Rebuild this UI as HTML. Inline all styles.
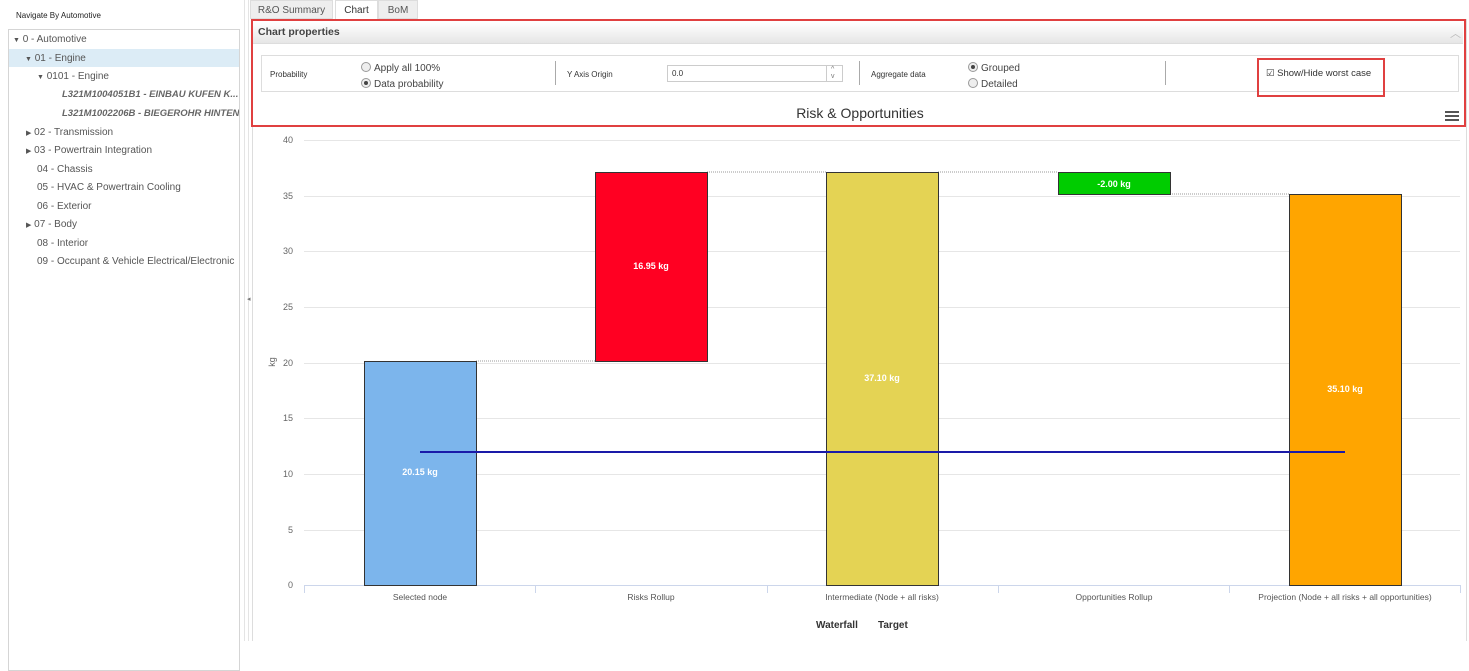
<!DOCTYPE html>
<html><head><meta charset="utf-8"><style>
body{margin:0;width:1469px;height:641px;overflow:hidden;background:#fff;font-family:"Liberation Sans",Arial,sans-serif;position:relative}
.a{position:absolute}
.t{font-size:10px;color:#555;white-space:nowrap}
.tri{font-size:7px;color:#555}
.r{display:inline-block;width:8px;height:8px;border:1px solid #999;border-radius:50%;background:#eee;vertical-align:-1px;margin-right:3px;position:relative}
.r.on:after{content:"";position:absolute;left:2px;top:2px;width:4px;height:4px;border-radius:50%;background:#444}
.lb{font-size:10px;color:#444;white-space:nowrap}
</style></head><body>
<div class="a" style="left:16px;top:11px;font-size:8px;color:#222">Navigate By Automotive</div>
<div class="a" style="left:8px;top:29px;width:230px;height:640px;border:1px solid #d5d5d5;overflow:hidden">
<div class="a" style="left:0;top:19px;width:230px;height:18px;background:#dcecf6"></div>
<div class="a t" style="left:4px;top:4px"><span class="tri">▼</span> 0 - Automotive</div>
<div class="a t" style="left:16px;top:23px"><span class="tri">▼</span> 01 - Engine</div>
<div class="a t" style="left:28px;top:41px"><span class="tri">▼</span> 0101 - Engine</div>
<div class="a t" style="left:53px;top:59px;font-weight:bold;font-style:italic;color:#666;font-size:9.5px">L321M1004051B1 - EINBAU KUFEN K...</div>
<div class="a t" style="left:53px;top:78px;font-weight:bold;font-style:italic;color:#666;font-size:9.5px">L321M1002206B - BIEGEROHR HINTEN</div>
<div class="a t" style="left:17px;top:97px"><span class="tri">▶</span> 02 - Transmission</div>
<div class="a t" style="left:17px;top:115px"><span class="tri">▶</span> 03 - Powertrain Integration</div>
<div class="a t" style="left:28px;top:134px">04 - Chassis</div>
<div class="a t" style="left:28px;top:152px">05 - HVAC &amp; Powertrain Cooling</div>
<div class="a t" style="left:28px;top:171px">06 - Exterior</div>
<div class="a t" style="left:17px;top:189px"><span class="tri">▶</span> 07 - Body</div>
<div class="a t" style="left:28px;top:208px">08 - Interior</div>
<div class="a t" style="left:28px;top:226px">09 - Occupant &amp; Vehicle Electrical/Electronic</div>
</div>
<div class="a" style="left:244px;top:0;width:1px;height:641px;background:#e4e4e4"></div>
<div class="a" style="left:248px;top:0;width:1px;height:641px;background:#e4e4e4"></div>
<div class="a" style="left:247px;top:295px;font-size:7px;color:#777">◂</div>
<div class="a" style="left:250px;top:0;width:83px;height:19px;background:#eee;border:1px solid #ddd;box-sizing:border-box;font-size:10px;color:#555;text-align:center;line-height:19px">R&amp;O Summary</div>
<div class="a" style="left:335px;top:0;width:43px;height:20px;background:#fff;border:1px solid #ddd;border-bottom:none;box-sizing:border-box;font-size:10px;color:#333;text-align:center;line-height:19px">Chart</div>
<div class="a" style="left:378px;top:0;width:40px;height:19px;background:#eee;border:1px solid #ddd;box-sizing:border-box;font-size:10px;color:#555;text-align:center;line-height:19px">BoM</div>
<div class="a" style="left:252px;top:19px;width:1213px;height:622px;border-left:1px solid #ddd;border-right:1px solid #ddd"></div>
<div class="a" style="left:253px;top:22px;width:1210px;height:21px;background:linear-gradient(#fff,#e6e6e6);border-bottom:1px solid #ddd"></div>
<div class="a" style="left:258px;top:26px;font-size:10.5px;font-weight:bold;color:#444">Chart properties</div>
<div class="a" style="left:1450px;top:25px;font-size:11px;color:#bbb">︿</div>
<div class="a" style="left:261px;top:55px;width:1198px;height:37px;border:1px solid #ddd;box-sizing:border-box"></div>
<div class="a" style="left:270px;top:70px;font-size:8px;color:#333">Probability</div>
<div class="a lb" style="left:361px;top:62px"><span class="r"></span>Apply all 100%</div>
<div class="a lb" style="left:361px;top:78px"><span class="r on"></span>Data probability</div>
<div class="a" style="left:555px;top:61px;width:1px;height:24px;background:#aaa"></div>
<div class="a" style="left:567px;top:70px;font-size:8px;color:#333">Y Axis Origin</div>
<div class="a" style="left:667px;top:65px;width:176px;height:17px;border:1px solid #ccc;box-sizing:border-box;font-size:8px;color:#333;padding:3px 4px">0.0</div>
<div class="a" style="left:826px;top:66px;width:1px;height:15px;background:#ccc"></div>
<div class="a" style="left:831px;top:66px;font-size:7px;color:#777;line-height:7px">^<br>v</div>
<div class="a" style="left:859px;top:61px;width:1px;height:24px;background:#aaa"></div>
<div class="a" style="left:871px;top:70px;font-size:8px;color:#333">Aggregate data</div>
<div class="a lb" style="left:968px;top:62px"><span class="r on"></span>Grouped</div>
<div class="a lb" style="left:968px;top:78px"><span class="r"></span>Detailed</div>
<div class="a" style="left:1165px;top:61px;width:1px;height:24px;background:#aaa"></div>
<div class="a" style="left:1266px;top:68px;font-size:9.5px;color:#333">☑ Show/Hide worst case</div>
<div class="a" style="left:1257px;top:58px;width:128px;height:39px;border:2px solid #e04040;box-sizing:border-box"></div>
<div class="a" style="left:251px;top:19px;width:1215px;height:108px;border:2px solid #e04040;box-sizing:border-box"></div>
<svg class="a" style="left:0;top:0" width="1469" height="641" font-family="Liberation Sans,Arial,sans-serif">
<text x="860" y="118" text-anchor="middle" font-size="14" fill="#333">Risk &amp; Opportunities</text>
<g stroke="#555" stroke-width="2"><line x1="1445" y1="112" x2="1459" y2="112"/><line x1="1445" y1="116" x2="1459" y2="116"/><line x1="1445" y1="120" x2="1459" y2="120"/></g>
<g stroke="#e6e6e6"><line x1="304" y1="140.5" x2="1460" y2="140.5"/><line x1="304" y1="196.5" x2="1460" y2="196.5"/><line x1="304" y1="251.5" x2="1460" y2="251.5"/><line x1="304" y1="307.5" x2="1460" y2="307.5"/><line x1="304" y1="363.5" x2="1460" y2="363.5"/><line x1="304" y1="418.5" x2="1460" y2="418.5"/><line x1="304" y1="474.5" x2="1460" y2="474.5"/><line x1="304" y1="530.5" x2="1460" y2="530.5"/></g>
<line x1="304" y1="585.5" x2="1460" y2="585.5" stroke="#ccd6eb"/>
<g stroke="#ccd6eb"><line x1="304.5" y1="585" x2="304.5" y2="593"/><line x1="535.5" y1="585" x2="535.5" y2="593"/><line x1="767.5" y1="585" x2="767.5" y2="593"/><line x1="998.5" y1="585" x2="998.5" y2="593"/><line x1="1229.5" y1="585" x2="1229.5" y2="593"/><line x1="1460.5" y1="585" x2="1460.5" y2="593"/></g>
<g font-size="9" fill="#666" text-anchor="end"><text x="293" y="143">40</text><text x="293" y="199">35</text><text x="293" y="254">30</text><text x="293" y="310">25</text><text x="293" y="366">20</text><text x="293" y="421">15</text><text x="293" y="477">10</text><text x="293" y="533">5</text><text x="293" y="588">0</text></g>
<text x="275" y="362" font-size="9" fill="#666" transform="rotate(-90 275 362)" text-anchor="middle">kg</text>
<g stroke="#999" stroke-dasharray="1,1"><line x1="476" y1="361" x2="595" y2="361"/><line x1="707" y1="172" x2="826" y2="172"/><line x1="938" y1="172" x2="1058" y2="172"/><line x1="1170" y1="194" x2="1289" y2="194"/></g>
<g stroke="#333" stroke-width="1">
<rect x="364.5" y="361.5" width="112" height="224" fill="#7cb5ec"/>
<rect x="595.5" y="172.5" width="112" height="189" fill="#ff0022"/>
<rect x="826.5" y="172.5" width="112" height="413" fill="#e4d354"/>
<rect x="1058.5" y="172.5" width="112" height="22" fill="#00cc00"/>
<rect x="1289.5" y="194.5" width="112" height="391" fill="#ffa500"/>
</g>
<line x1="420" y1="452" x2="1345" y2="452" stroke="#1a1aa8" stroke-width="2"/>
<g font-size="9" font-weight="bold" fill="#fff" text-anchor="middle"><text x="420" y="475">20.15 kg</text><text x="651" y="269">16.95 kg</text><text x="882" y="381">37.10 kg</text><text x="1114" y="187">-2.00 kg</text><text x="1345" y="392">35.10 kg</text></g>
<g font-size="8.5" fill="#555" text-anchor="middle"><text x="420" y="600">Selected node</text><text x="651" y="600">Risks Rollup</text><text x="882" y="600">Intermediate (Node + all risks)</text><text x="1114" y="600">Opportunities Rollup</text><text x="1345" y="600">Projection (Node + all risks + all opportunities)</text></g>
<g font-size="10" font-weight="bold" fill="#333"><text x="816" y="628">Waterfall</text><text x="878" y="628">Target</text></g>
</svg>
</body></html>
